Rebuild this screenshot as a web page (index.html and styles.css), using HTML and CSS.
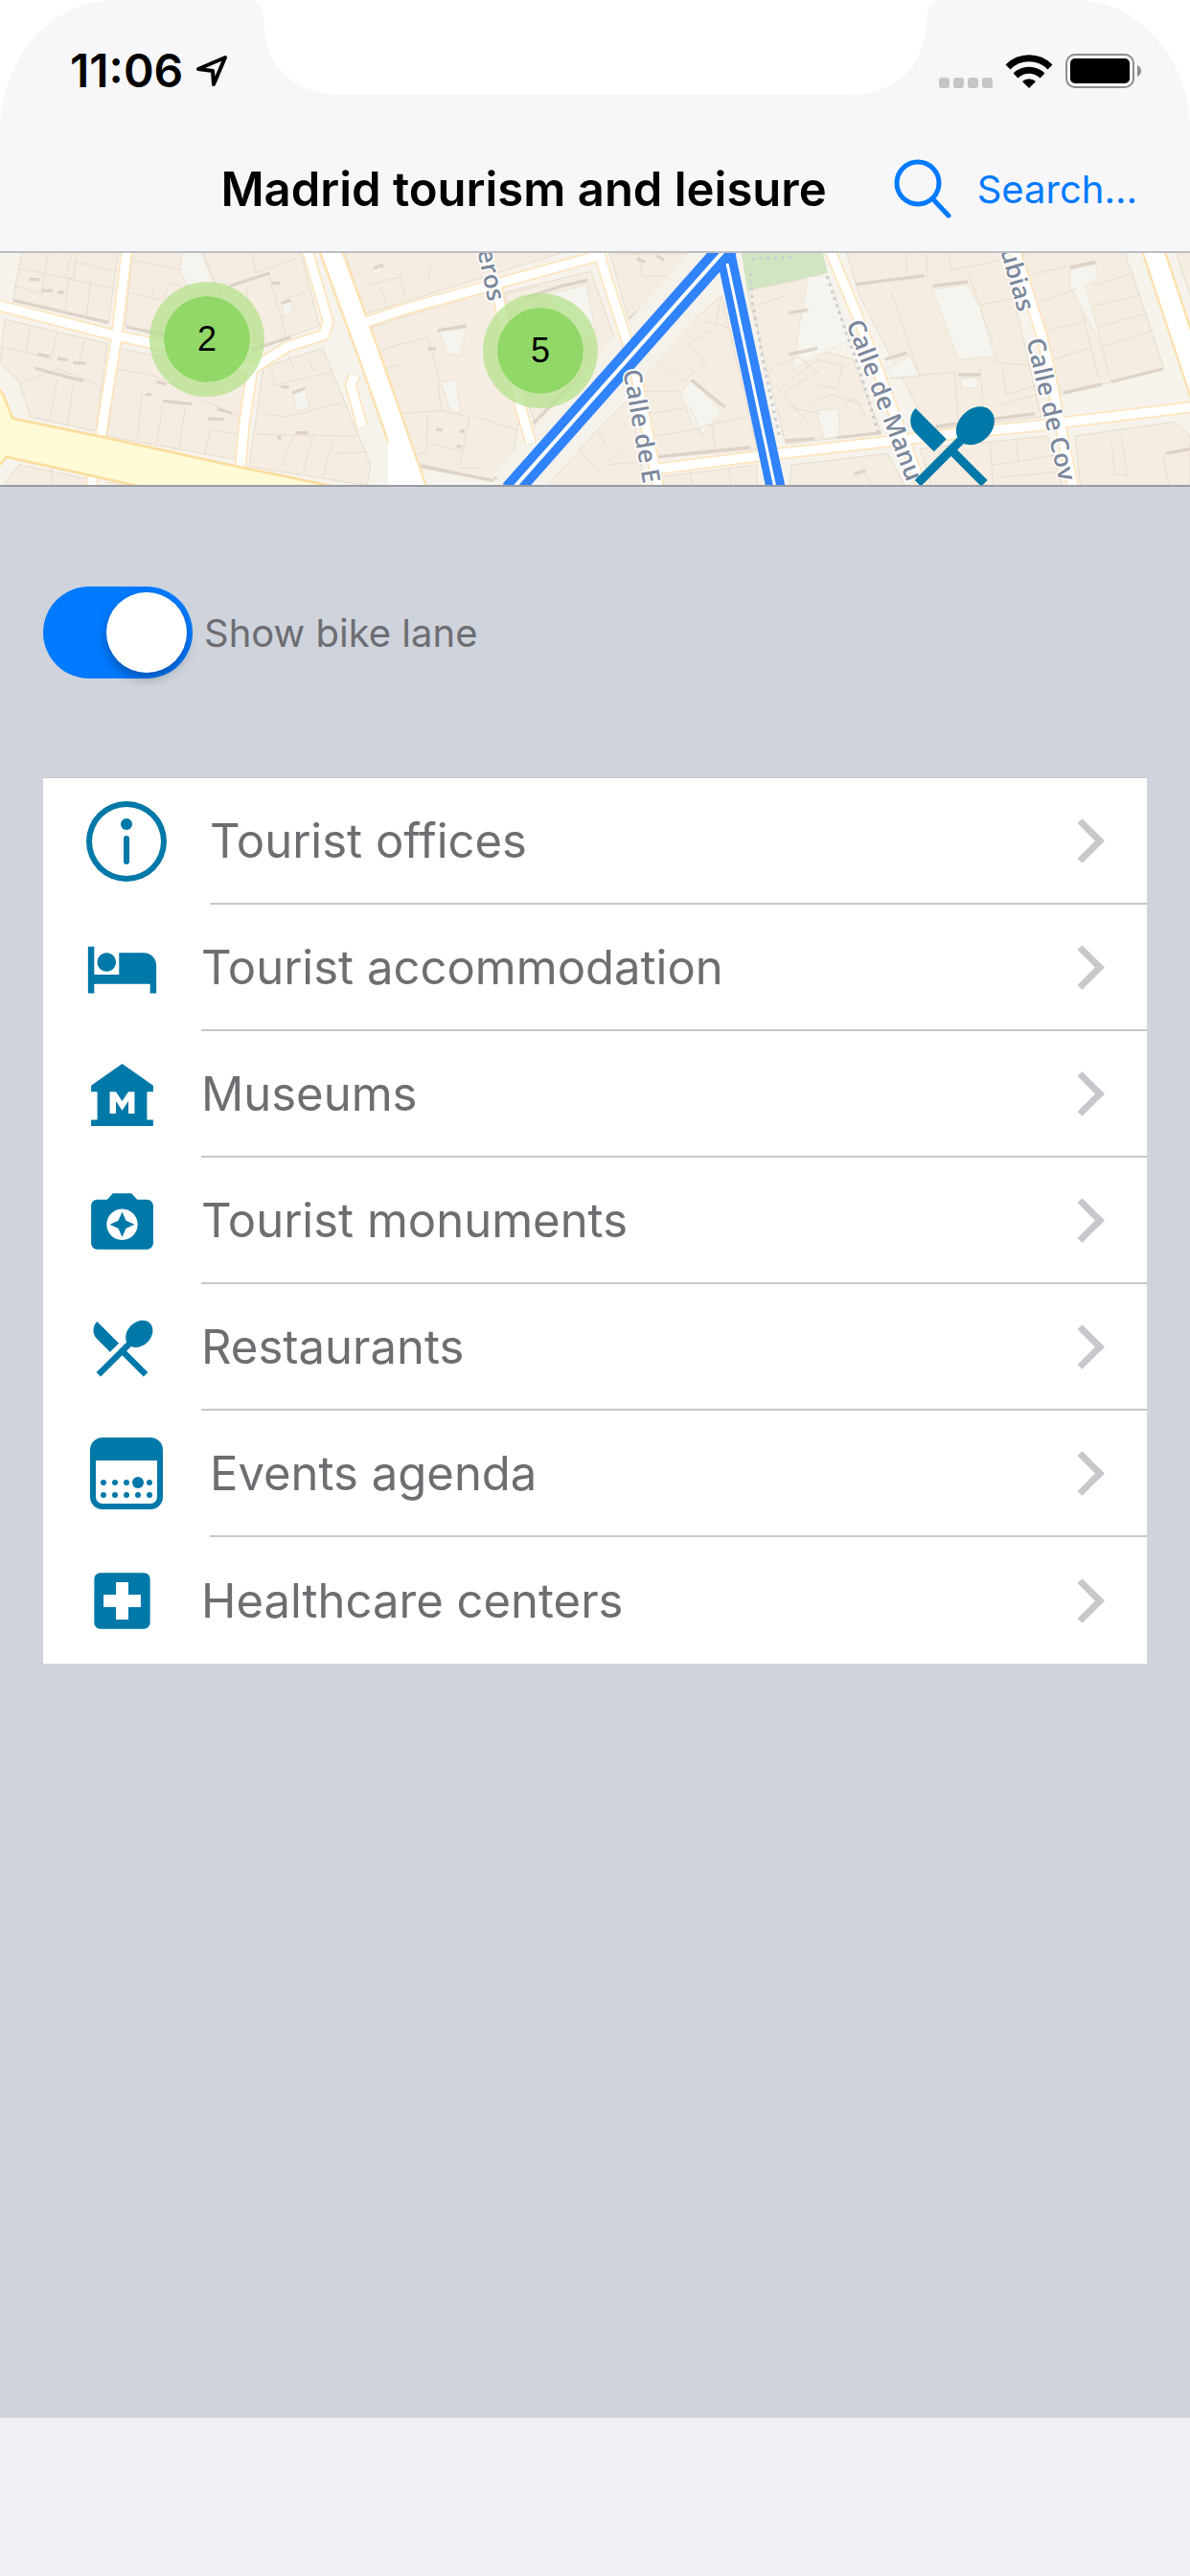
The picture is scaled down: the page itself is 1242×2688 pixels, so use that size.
FILE: index.html
```html
<!DOCTYPE html>
<html lang="en">
<head>
  <meta charset="UTF-8" />
  <meta name="viewport" content="width=device-width, initial-scale=1" />
  <title>Madrid tourism and leisure</title>
  <link rel="stylesheet" href="styles.css">
</head>
<body>

  <header class="header">
    <svg class="notch" viewBox="0 0 726 99" aria-hidden="true">
      <path d="M0 0C12 0 16 6 17 20C18 70 48 99 100 99H626C678 99 708 70 709 20C710 6 714 0 726 0Z" />
    </svg>

    <!-- Status bar -->
    <div class="status">
      <div class="status-group">
        <span class="time">11:06</span>
        <svg class="location" viewBox="0 0 34 34" aria-hidden="true">
          <path d="M31 3L3 15L18 17L19 31Z" />
        </svg>
      </div>
      <div class="status-group">
        <svg class="signal" viewBox="0 0 56 36" aria-hidden="true">
          <rect x="0" y="25" width="11" height="11" rx="3" />
          <rect x="15" y="25" width="11" height="11" rx="3" />
          <rect x="30" y="25" width="11" height="11" rx="3" />
          <rect x="45" y="25" width="11" height="11" rx="3" />
        </svg>
        <svg class="wifi" viewBox="0 0 50 36" aria-hidden="true">
          <path class="wifi-arc" d="M3 14A31 31 0 0 1 47 14M11 23A20 20 0 0 1 39 23" />
          <path d="M25 36L18 29A10 10 0 0 1 32 29Z" />
        </svg>
        <svg class="battery" viewBox="0 0 80 36" aria-hidden="true">
          <rect class="battery-case" x="1" y="1" width="70" height="34" rx="9" />
          <rect x="5" y="5" width="62" height="26" rx="5" />
          <path class="battery-tip" d="M75 12Q79 14 79 18Q79 22 75 24Z" />
        </svg>
      </div>
    </div>

    <!-- Title bar -->
    <div class="navbar">
      <h1>Madrid tourism and leisure</h1>
      <button type="button" class="search">
        <svg class="search-icon" viewBox="0 0 60 62" aria-hidden="true">
          <ellipse cx="25" cy="25" rx="22" ry="22" />
          <path d="M40 41L57 59" />
        </svg>
        Search...
      </button>
    </div>
  </header>

  <!-- Map -->
  <section class="map">
    <svg class="map-canvas" viewBox="0 27 3726 729" preserveAspectRatio="xMinYMin slice" aria-label="Map of Madrid">
      <defs>
        <path id="streets" d="M398 10L365 290L314 606M-10 190L360 285L600 335L790 390L900 320L1015 283L1027 240L960 10M790 390L765 560L752 702M290 725L286 770M1120 252L1260 205L1875 35M1875 10L1885 60L1972 330M1552 120L1630 510L1662 620M1990 400L2065 780M2040 705L2380 662L2946 598L3226 570L3740 508M2595 10L2685 225L2890 770M3175 10L3266 300L3362 770M1110 410L1098 440L1134 570" />
        <path id="avenues" d="M1032 10L1155 345L1262 650L1310 790M3608 10L3770 500" />
      </defs>

      <rect class="ground" x="0" y="0" width="3726" height="780" />

      <!-- Building blocks -->
      <g class="blocks">
        <path d="M70 20H370L340 245L40 175ZM240 20L232 105L204 105L228 20" />
        <path d="M415 20H940L1000 255L830 315L470 270L392 255Z" />
        <path d="M15 235L335 310L300 585L95 540L60 430L0 370Z" />
        <path d="M375 325L770 410L745 675L335 600Z" />
        <path d="M825 385L1010 325L1160 690L1150 755L780 695Z" />
        <path d="M60 690L280 735V770H0Z" />
        <path d="M1080 20H1780L1250 185L1135 220Z" />
        <path d="M1160 260L1540 140L1630 530L1610 640L1545 740L1290 680L1215 440Z" />
        <path d="M1580 150L1850 85L1930 310L1680 580L1655 500Z" />
        <path d="M1910 30H2170L1970 240Z" />
        <path d="M2260 160L2370 640L2045 670L1990 390Z" />
        <path d="M1890 560L1975 480L2020 770H1700Z" />
        <path d="M2050 730L2370 690V770H2060Z" />
        <path d="M2340 145L2530 105L2560 330L2670 360L2760 590L2460 625Z" />
        <path d="M2650 20H3140L3260 540L2910 580L2690 160Z" />
        <path d="M3200 20H3520L3645 390L3320 470Z" />
        <path d="M2480 690L2780 655L2840 770H2470Z" />
        <path d="M2880 640L3280 600L3330 770H2920Z" />
        <path d="M3365 600L3680 555L3726 600V770H3385Z" />
        <path d="M3680 20H3740V200Z" />
      </g>

      <!-- Courtyards -->
      <g class="courts">
        <path d="M570 20H630L670 130L600 150L565 90Z" />
        <path d="M880 185L910 172L918 215L890 225ZM918 470L955 455L970 510L930 522Z" />
        <path d="M1375 272L1460 262L1440 350L1400 340Z" />
        <path d="M1380 430L1430 425L1442 530L1410 520Z" />
        <path d="M1710 160L1835 125L1865 270L1820 310Z" />
        <path d="M2130 465L2165 425L2260 520L2200 595L2170 570Z" />
        <path d="M2530 100L2595 100L2660 300L2480 390Z" />
        <path d="M2920 140L3030 125L3070 200L3125 350L3000 360Z" />
        <path d="M3350 80L3430 60L3440 100L3400 130L3480 430L3440 300L3350 130Z" />
        <path d="M3010 420L3060 415L3062 450L3008 450ZM2555 520L2625 515L2630 600L2580 610ZM2770 390L2850 350L2880 415L2800 420Z" />
        <path d="M1170 70L1195 60L1197 85L1165 92Z" />
      </g>

      <!-- Parcel lines -->
      <path class="parcels" d="M60 75L365 140M150 30L130 160M215 105L205 205M285 110L270 225M45 130L130 155M235 55L368 85M415 50L565 80M400 150L510 175M510 175L530 120L565 130M480 140V160M635 27L690 160M720 130L845 90M770 130L800 300M840 90L895 285M790 27L800 90L925 45M890 170L960 150M95 255L80 340M180 275L160 360M265 300L245 380M0 320L130 350M65 435L180 390L310 440M180 420L155 555M230 440L210 570M365 390L480 410L600 470L750 540M445 460L430 610M510 500L490 625M580 510L560 640M660 570L640 660M665 580L745 595M850 390L860 440L1040 400M820 530L900 540L1070 495M900 340L920 390M965 360L985 400M800 595L1120 600M920 600L880 690M980 600L950 710M1045 610L1010 730M1040 655L1150 650M165 690L160 755M330 745L400 755M1140 130L1260 100M1190 130L1215 205M1160 345L1260 310M1200 390L1260 375M1250 90L1270 170M1340 110L1350 70M1230 320L1340 290L1370 400L1380 520L1250 530M1340 535L1335 650L1300 660M1380 520L1470 540L1440 690M1490 540L1620 580M1340 620L1450 650M1440 700L1500 700M1560 160L1690 130M1580 220L1700 190L1730 300L1600 370M1840 50L1870 25M2000 27L2010 100L2090 100M2040 350L2140 430L2210 370L2140 300M2120 460L2000 460M2030 530L2160 510L2200 600M2050 600L2200 575M2200 570L2340 540M2230 570L2240 640M2160 310L2220 270M2200 240L2280 260M2260 160L2240 250M1900 630L1860 570M1890 690L1950 640M1810 640L1880 720M1900 690L2010 680M2160 710L2170 755M2280 700L2290 755M2350 200L2460 160M2370 410L2500 350L2560 400L2460 460M2480 420L2560 360L2640 380L2620 450L2560 440M2540 500L2600 470L2700 500M2640 500L2680 480L2710 540M2430 440L2530 560M2470 510L2570 530M2835 27L2840 90M2900 30L2905 100M2970 27L2980 80L3130 50M3030 90L3070 190L3170 170M2790 150L2880 410L2780 420M2880 410L2990 400L3000 550M3070 390L3080 550M3140 390L3150 470L3250 440M3070 200L3120 370L3240 380M3140 500L3250 470M3230 95L3340 70M3260 180L3370 140M3280 270L3400 240M3300 360L3420 320M3420 130L3550 90M3430 190L3570 160M3440 260L3590 215M3450 320L3610 270M3390 220L3440 420M2700 700L2730 755M3100 615L3110 755M3180 610L3190 680L3300 660M3110 690L3190 680M3120 730L3330 710M3480 620L3490 720L3530 725L3510 600M3640 655L3660 755" />

      <!-- Building shadows -->
      <path class="shadows" d="M42 175L340 245M395 258L600 305M790 330L910 290M110 388L260 428M118 343L155 352M180 357L212 362M228 370L268 372M490 430L520 438M455 470L475 470M510 490L600 500M650 545L700 548M680 515L725 528M720 130L845 90M915 465L955 450M880 185L910 175M870 600L880 610M925 590L965 590M1170 75L1200 65M1370 270L1460 255M1340 328L1365 325M1650 165L1760 130L1840 112M1970 235L2110 110M1670 560L1930 300M1550 735L1620 640M2060 665L2350 635M2165 425L2270 510M2680 125L2895 98M2920 130L3030 117M2770 360L2840 340M2470 345L2560 325M3330 465L3450 438M3480 430L3640 390M3350 72L3430 55M3000 408L3070 408M2620 605L2760 590M2930 570L3240 530M2470 215L2530 205M2460 615L2550 608M3650 655L3726 640M2675 718L2710 708M130 145L165 145M180 150L200 150M92 110L125 110M850 122L878 122M880 445L905 448M1365 580L1385 580M1440 585L1455 585M1430 633L1445 633M1995 45L2020 55M2055 35L2080 50M1295 690L1545 740" />

      <path class="park" d="M2320 20H2575L2592 90L2466 118L2340 145Z" />
      <path class="kerb" d="M2350 90L2356 180L2390 370L2440 600M2590 100L2620 190L2700 420L2750 590M2355 45L2480 40" />
      <path class="plaza" d="M2262 20L1600 770" />

      <!-- Roads -->
      <use class="avenue-edge" href="#avenues" />
      <use class="street-edge" href="#streets" />
      <use class="avenue-fill" href="#avenues" />
      <use class="street-fill" href="#streets" />
      <path class="junction" d="M1215 560L1275 670L1340 770H1215Z" />
      <path class="highway" d="M-10 445L10 470L40 545L330 605L740 695L1080 765H470L20 665L-10 700Z" />

      <!-- Bike lane -->
      <path class="lane-main" d="M2284 0L1600 772" />
      <path class="lane-side" d="M2270 20L2431 772" />
      <path class="lane-gap" d="M2268 18L1600 772" />
      <path class="lane-gap lane-gap-thin" d="M2277 60L2429 772" />

      <!-- Street names -->
      <g class="street-names">
        <text transform="translate(1529 181) rotate(78)" text-anchor="end">eros</text>
        <text transform="translate(1951 396) rotate(80)">Calle de E</text>
        <text transform="translate(2649 248) rotate(69)">Calle de Manu</text>
        <text transform="translate(3188 214) rotate(74)" text-anchor="end">ubias</text>
        <text transform="translate(3214 300) rotate(77)">Calle de Cov</text>
      </g>

      <g class="pin" transform="translate(2813 465) scale(13.75)">
        <path d="M8.1 13.34l2.83-2.83L3.91 3.5c-1.56 1.56-1.56 4.09 0 5.66l4.19 4.18zm6.78-1.81c1.53.71 3.68.21 5.27-1.38 1.91-1.91 2.28-4.65.81-6.12-1.46-1.46-4.2-1.1-6.12.81-1.59 1.59-2.09 3.74-1.38 5.27L3.7 19.87l1.41 1.41L12 14.41l6.88 6.88 1.41-1.41L13.41 13l1.47-1.47z" />
      </g>
    </svg>
    <button type="button" class="cluster cluster-west">2</button>
    <button type="button" class="cluster cluster-center">5</button>
  </section>

  <main class="content">
    <label class="toggle">
      <input type="checkbox" role="switch" checked />
      Show bike lane
    </label>

    <!-- Categories -->
    <nav class="list">
      <a class="row" href="#offices">
        <svg class="icon icon-large" viewBox="0 0 90 90" aria-hidden="true">
          <path fill-rule="evenodd" d="M45 3a42 42 0 1 0 0 84a42 42 0 1 0 0-84ZM45 9a36 36 0 1 1 0 72a36 36 0 1 1 0-72Z" />
          <circle cx="45" cy="27" r="6" />
          <rect x="42" y="39" width="6" height="30" rx="3" />
        </svg>
        <span class="row-text">Tourist offices</span>
      </a>
      <a class="row" href="#accommodation">
        <svg class="icon" viewBox="-0.5 -0.5 25 25" aria-hidden="true">
          <path d="M7 13c1.66 0 3-1.34 3-3S8.66 7 7 7s-3 1.34-3 3 1.34 3 3 3zm12-6h-8v7H3V5H1v15h2v-3h18v3h2v-9c0-2.21-1.79-4-4-4z" />
        </svg>
        <span class="row-text">Tourist accommodation</span>
      </a>
      <a class="row" href="#museums">
        <svg class="icon" viewBox="-0.5 -0.5 25 25" aria-hidden="true">
          <path d="M22 11V9L12 2 2 9v2h2v9H2v2h20v-2h-2v-9h2zm-6 7h-2v-4l-2 3-2-3v4H8v-7h2l2 3 2-3h2v7z" />
        </svg>
        <span class="row-text">Museums</span>
      </a>
      <a class="row" href="#monuments">
        <svg class="icon" viewBox="-0.5 -0.5 25 25" aria-hidden="true">
          <path d="M9 3L7.17 5H4c-1.1 0-2 .9-2 2v12c0 1.1.9 2 2 2h16c1.1 0 2-.9 2-2V7c0-1.1-.9-2-2-2h-3.17L15 3H9zm3 15c-2.76 0-5-2.24-5-5s2.24-5 5-5 5 2.24 5 5-2.24 5-5 5zm0-1l1.25-2.75L16 13l-2.75-1.25L12 9l-1.25 2.75L8 13l2.75 1.25z" />
        </svg>
        <span class="row-text">Tourist monuments</span>
      </a>
      <a class="row" href="#restaurants">
        <svg class="icon" viewBox="-0.5 -0.5 25 25" aria-hidden="true">
          <path d="M8.1 13.34l2.83-2.83L3.91 3.5c-1.56 1.56-1.56 4.09 0 5.66l4.19 4.18zm6.78-1.81c1.53.71 3.68.21 5.27-1.38 1.91-1.91 2.28-4.65.81-6.12-1.46-1.46-4.2-1.1-6.12.81-1.59 1.59-2.09 3.74-1.38 5.27L3.7 19.87l1.41 1.41L12 14.41l6.88 6.88 1.41-1.41L13.41 13l1.47-1.47z" />
        </svg>
        <span class="row-text">Restaurants</span>
      </a>
      <a class="row" href="#events">
        <svg class="icon icon-large" viewBox="0 0 90 90" aria-hidden="true">
          <path fill-rule="evenodd" d="M20 7H70A13 13 0 0 1 83 20V69A13 13 0 0 1 70 82H20A13 13 0 0 1 7 69V20A13 13 0 0 1 20 7ZM13 31V69A7 7 0 0 0 20 76H70A7 7 0 0 0 77 69V31Z" />
          <circle cx="21" cy="54" r="3" />
          <circle cx="33" cy="54" r="3" />
          <circle cx="45" cy="54" r="3" />
          <circle cx="57" cy="54" r="6" />
          <circle cx="69" cy="54" r="3" />
          <circle cx="21" cy="67" r="3" />
          <circle cx="33" cy="67" r="3" />
          <circle cx="45" cy="67" r="3" />
          <circle cx="57" cy="67" r="3" />
          <circle cx="69" cy="67" r="3" />
        </svg>
        <span class="row-text">Events agenda</span>
      </a>
      <a class="row" href="#healthcare">
        <svg class="icon" viewBox="-0.5 -0.5 25 25" aria-hidden="true">
          <path d="M19 3H5c-1.1 0-1.99.9-1.99 2L3 19c0 1.1.9 2 2 2h14c1.1 0 2-.9 2-2V5c0-1.1-.9-2-2-2zm-1 11h-4v4h-4v-4H6v-4h4V6h4v4h4v4z" />
        </svg>
        <span class="row-text">Healthcare centers</span>
      </a>
    </nav>
  </main>

  <footer class="footer"></footer>

</body>
</html>
```

FILE: styles.css
```css
* {
  box-sizing: border-box;
}
body {
  font-family: Inter, Roboto, sans-serif;
  margin: 0;
  min-height: 100vh;
  display: flex;
  flex-direction: column;
  background: #fff;
  color: #6d6d72;
}
button {
  border: none;
  padding: 0;
  background: none;
  font-family: inherit;
  cursor: pointer;
}

/* Header */
.header {
  position: relative;
  background: #f7f7fa;
  border-bottom: 2px solid #bcbdc2;
  border-radius: 120px 120px 0 0 / 135px 135px 0 0;
}
.notch {
  position: absolute;
  top: 0;
  left: 50%;
  width: 726px;
  margin-left: -363px;
  fill: #fff;
}
.status {
  display: flex;
  justify-content: space-between;
  height: 132px;
  padding: 56px 50px 0 73px;
  color: #000;
}
.status-group {
  display: flex;
  align-items: flex-start;
  gap: 13px;
}
.time {
  font-size: 48px;
  font-weight: 600;
  line-height: 36px;
}
.location {
  width: 34px;
  height: 36px;
  fill: none;
  stroke: #000;
  stroke-width: 4;
  stroke-linejoin: round;
}
.signal {
  width: 56px;
  fill: #c5c5c8;
}
.wifi {
  width: 50px;
}
.wifi-arc {
  fill: none;
  stroke: #000;
  stroke-width: 7;
}
.battery {
  width: 80px;
}
.battery-case {
  fill: none;
  stroke: #8e8e90;
  stroke-width: 2;
}
.battery-tip {
  fill: #8e8e90;
}

.navbar {
  display: flex;
  align-items: center;
  justify-content: flex-end;
  gap: 70px;
  height: 130px;
  padding-right: 55px;
}
h1 {
  margin: 0;
  font-size: 49px;
  font-weight: 600;
  color: #000;
}
.search {
  display: flex;
  align-items: center;
  gap: 27px;
  font-size: 40px;
  color: #007aff;
}
.search-icon {
  width: 60px;
  fill: none;
  stroke: #007aff;
  stroke-width: 5;
  stroke-linecap: round;
}

/* Map */
.map {
  position: relative;
  height: 244px;
  border-bottom: 2px solid #9a9ba1;
  overflow: hidden;
}
.map-canvas {
  display: block;
  width: 100%;
  height: 100%;
}
.ground {
  fill: #f6f3ec;
}
.blocks {
  fill: #f5ede1;
  stroke: #e6dccd;
  stroke-width: 3;
}
.courts {
  fill: #f6f4ee;
  stroke: #e6dccd;
  stroke-width: 2;
}
.parcels {
  fill: none;
  stroke: #e0d5c6;
  stroke-width: 2;
}
.shadows {
  fill: none;
  stroke: #ddd3c8;
  stroke-width: 10;
}
.park {
  fill: #d2e5c3;
}
.kerb {
  fill: none;
  stroke: #c9ccd2;
  stroke-width: 9;
  stroke-dasharray: 9 14;
}
.plaza {
  stroke: #f5f2eb;
  stroke-width: 150;
}
.street-edge,
.street-fill,
.avenue-edge,
.avenue-fill {
  fill: none;
  stroke-linejoin: round;
}
.street-edge {
  stroke: #fde5bb;
  stroke-width: 38;
}
.street-fill {
  stroke: #fff;
  stroke-width: 28;
}
.avenue-edge {
  stroke: #fde0ac;
  stroke-width: 74;
}
.avenue-fill {
  stroke: #fff;
  stroke-width: 60;
}
.junction {
  fill: #fff;
}
.highway {
  fill: #fffbd6;
  stroke: #fcdd9c;
  stroke-width: 8;
}
.lane-main {
  stroke: #3083fb;
  stroke-width: 69;
}
.lane-side {
  stroke: #3083fb;
  stroke-width: 60;
}
.lane-gap {
  stroke: #fff;
  stroke-width: 12;
}
.lane-gap-thin {
  stroke-width: 9;
}
.street-names {
  font-family: "Open Sans", sans-serif;
  font-size: 78px;
  font-weight: 600;
  fill: #7c889b;
  stroke: #fff;
  stroke-width: 10;
  stroke-linejoin: round;
  paint-order: stroke;
}
.pin {
  fill: #0078a8;
}
.cluster {
  position: absolute;
  width: 120px;
  height: 120px;
  border: 15px solid rgba(181, 226, 140, 0.75);
  border-radius: 50%;
  background: #92d868;
  background-clip: padding-box;
  font-family: "Liberation Sans", sans-serif;
  font-size: 36px;
  color: #000;
}
.cluster-west {
  top: 30px;
  left: 156px;
}
.cluster-center {
  top: 42px;
  left: 504px;
}

/* Content */
.content {
  flex: 1;
  padding: 104px 45px;
  background: #cfd4dc;
}
.toggle {
  display: flex;
  align-items: center;
  gap: 12px;
  width: fit-content;
  font-size: 40px;
}
.toggle input {
  appearance: none;
  display: flex;
  align-items: center;
  width: 156px;
  height: 96px;
  margin: 0;
  padding: 6px;
  border-radius: 48px;
  background: #c7c7cc;
}
.toggle input::before {
  content: '';
  width: 84px;
  height: 84px;
  border-radius: 50%;
  background: #fff;
  box-shadow: 0 6px 12px rgba(0, 0, 0, 0.3);
}
.toggle input:checked {
  justify-content: flex-end;
  background: #007aff;
}

.list {
  margin-top: 103px;
  background: #fff;
  border-top: 1px solid #c8c7cc;
}
.row {
  display: flex;
  align-items: center;
  gap: 42px;
  height: 132px;
  padding-left: 42px;
  color: inherit;
  font-size: 49px;
  text-decoration: none;
}
.icon {
  width: 81px;
  height: 81px;
  fill: #0078a8;
}
.icon-large {
  width: 90px;
  height: 90px;
}
.row-text {
  flex: 1;
  display: flex;
  align-items: center;
  justify-content: space-between;
  height: 132px;
  padding-right: 51px;
  border-bottom: 2px solid #c8c7cc;
}
.row:last-child .row-text {
  border-bottom: none;
}
/* Chevron */
.row-text::after {
  content: '';
  width: 26px;
  height: 26px;
  border: solid #c7c7cc;
  border-width: 7px 7px 0 0;
  transform: rotate(45deg);
}

.footer {
  height: 165px;
  background: #efeff4;
}
```
